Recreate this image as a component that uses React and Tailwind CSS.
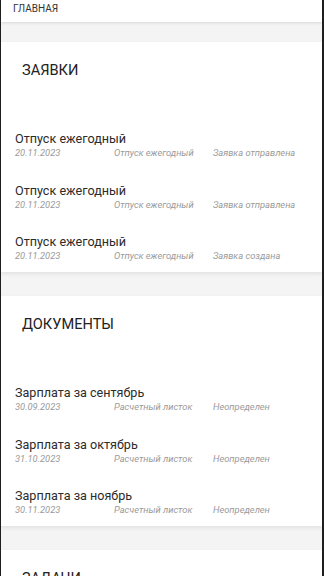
import React from "react";

const requests = [
  { title: "Отпуск ежегодный", date: "20.11.2023", type: "Отпуск ежегодный", status: "Заявка отправлена" },
  { title: "Отпуск ежегодный", date: "20.11.2023", type: "Отпуск ежегодный", status: "Заявка отправлена" },
  { title: "Отпуск ежегодный", date: "20.11.2023", type: "Отпуск ежегодный", status: "Заявка создана" },
];

const documents = [
  { title: "Зарплата за сентябрь", date: "30.09.2023", type: "Расчетный листок", status: "Неопределен" },
  { title: "Зарплата за октябрь", date: "31.10.2023", type: "Расчетный листок", status: "Неопределен" },
  { title: "Зарплата за ноябрь", date: "30.11.2023", type: "Расчетный листок", status: "Неопределен" },
];

function Item({ item }) {
  return (
    <div className="px-[14px]">
      <div className="text-[12.6px] leading-[17px] text-[#2b2b2b]">{item.title}</div>
      <div className="grid grid-cols-[99px_99px_1fr] text-[9.3px] leading-[12px] italic text-[#9a9a9a]">
        <span>{item.date}</span>
        <span>{item.type}</span>
        <span>{item.status}</span>
      </div>
    </div>
  );
}

function Section({ title, items }) {
  return (
    <section className="bg-white shadow-[0_2px_4px_rgba(0,0,0,0.08)]">
      <h2 className="pt-[19px] pl-[21px] text-[14.6px] leading-[18px] text-[#222]">{title}</h2>
      <div className="pt-[51px] pb-[10px] flex flex-col gap-[22.5px]">
        {items.map((item, i) => (
          <Item key={i} item={item} />
        ))}
      </div>
    </section>
  );
}

export default function App() {
  return (
    <div
      className="h-[576px] overflow-hidden bg-[#f4f4f4] border-l-[1.5px] border-r-2 border-[#1e1e1e]"
      style={{ fontFamily: "Roboto, 'Noto Sans', sans-serif" }}
    >
      {/* HEADER */}
      <header className="h-[22px] bg-white shadow-[0_1px_3px_rgba(0,0,0,0.12)] pl-[12px] pt-[3px] text-[10px] leading-[12px] text-[#333] relative z-10">
        ГЛАВНАЯ
      </header>

      <div className="flex flex-col gap-[24px] pt-[20px]">
        <Section title="ЗАЯВКИ" items={requests} />
        <Section title="ДОКУМЕНТЫ" items={documents} />
        <Section title="ЗАДАЧИ" items={[]} />
      </div>
    </div>
  );
}
